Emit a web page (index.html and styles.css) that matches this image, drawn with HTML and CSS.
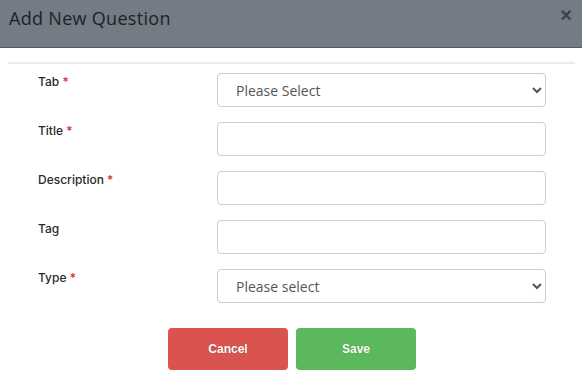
FILE: index.html
```html
<!DOCTYPE html>
<html>
<head>
<meta charset="utf-8">
<link rel="stylesheet" href="styles.css">
</head>
<body>
<div class="modal">
  <div class="modal-header">
    <h4 class="modal-title">Add New Question</h4>
    <button class="close" type="button">&times;</button>
  </div>
  <div class="modal-body">
    <hr class="divider">
    <form class="form">
      <div class="row">
        <label class="label">Tab <span class="req">*</span></label>
        <select class="control select"><option>Please Select</option></select>
      </div>
      <div class="row">
        <label class="label">Title <span class="req">*</span></label>
        <input class="control" type="text">
      </div>
      <div class="row">
        <label class="label">Description <span class="req">*</span></label>
        <input class="control" type="text">
      </div>
      <div class="row">
        <label class="label">Tag</label>
        <input class="control" type="text">
      </div>
      <div class="row">
        <label class="label">Type <span class="req">*</span></label>
        <select class="control select"><option>Please select</option></select>
      </div>
      <div class="actions">
        <button class="btn btn-cancel" type="button">Cancel</button>
        <button class="btn btn-save" type="button">Save</button>
      </div>
    </form>
  </div>
</div>
</body>
</html>
```
FILE: styles.css
```css
html, body {
  margin: 0;
  padding: 0;
  background: #fff;
}
body {
  font-family: "Open Sans", "Liberation Sans", sans-serif;
  color: #333;
}
.modal {
  width: 582px;
}
.modal-header {
  background: #737b84;
  border-bottom: 1px solid #4f5962;
  display: flex;
  align-items: flex-start;
  justify-content: space-between;
  box-sizing: border-box;
  height: 48px;
}
.modal-title {
  margin: 0;
  padding: 5px 0 0 9px;
  font-size: 18px;
  font-weight: 400;
  color: #1e2226;
  letter-spacing: 0.3px;
  line-height: 26px;
}
.close {
  border: 0;
  background: transparent;
  padding: 0;
  margin: 3px 10px 0 0;
  font-family: "Liberation Sans", sans-serif;
  font-size: 20px;
  font-weight: 700;
  line-height: 24px;
  color: #3b4148;
}
.modal-body {
  padding: 14px 7px 0 8px;
}
.divider {
  margin: 0;
  border: 0;
  border-top: 2px solid #ececec;
}
.form {
  padding-top: 9px;
}
.row {
  display: flex;
  align-items: flex-start;
  margin-bottom: 15px;
}
.label {
  width: 209px;
  padding-left: 30px;
  padding-top: 0;
  box-sizing: border-box;
  font-family: "Inter", "Open Sans", sans-serif;
  font-size: 12px;
  font-weight: 500;
  color: #2a2a2a;
  line-height: 17px;
}
.req {
  color: #e0282e;
}
.control {
  width: 329px;
  height: 34px;
  box-sizing: border-box;
  border: 1px solid #cfcfcf;
  border-radius: 4px;
  background: #fff;
  font-family: "Open Sans", "Liberation Sans", sans-serif;
  font-size: 14px;
  color: #555;
  padding: 0 12px;
  margin: 0;
  outline: none;
}
.select {
  padding-left: 14px;
}
.actions {
  display: flex;
  justify-content: center;
  gap: 8px;
  padding-top: 10px;
  padding-left: 1px;
}
.btn {
  width: 120px;
  height: 42px;
  border: 0;
  border-radius: 4px;
  color: #fff;
  font-family: "Liberation Sans", Arial, sans-serif;
  font-size: 12px;
  font-weight: 700;
  text-shadow: 0 0 1px rgba(0,0,0,0.35);
}
.btn-cancel {
  background: #d9534f;
}
.btn-save {
  background: #5cb85c;
}
```
